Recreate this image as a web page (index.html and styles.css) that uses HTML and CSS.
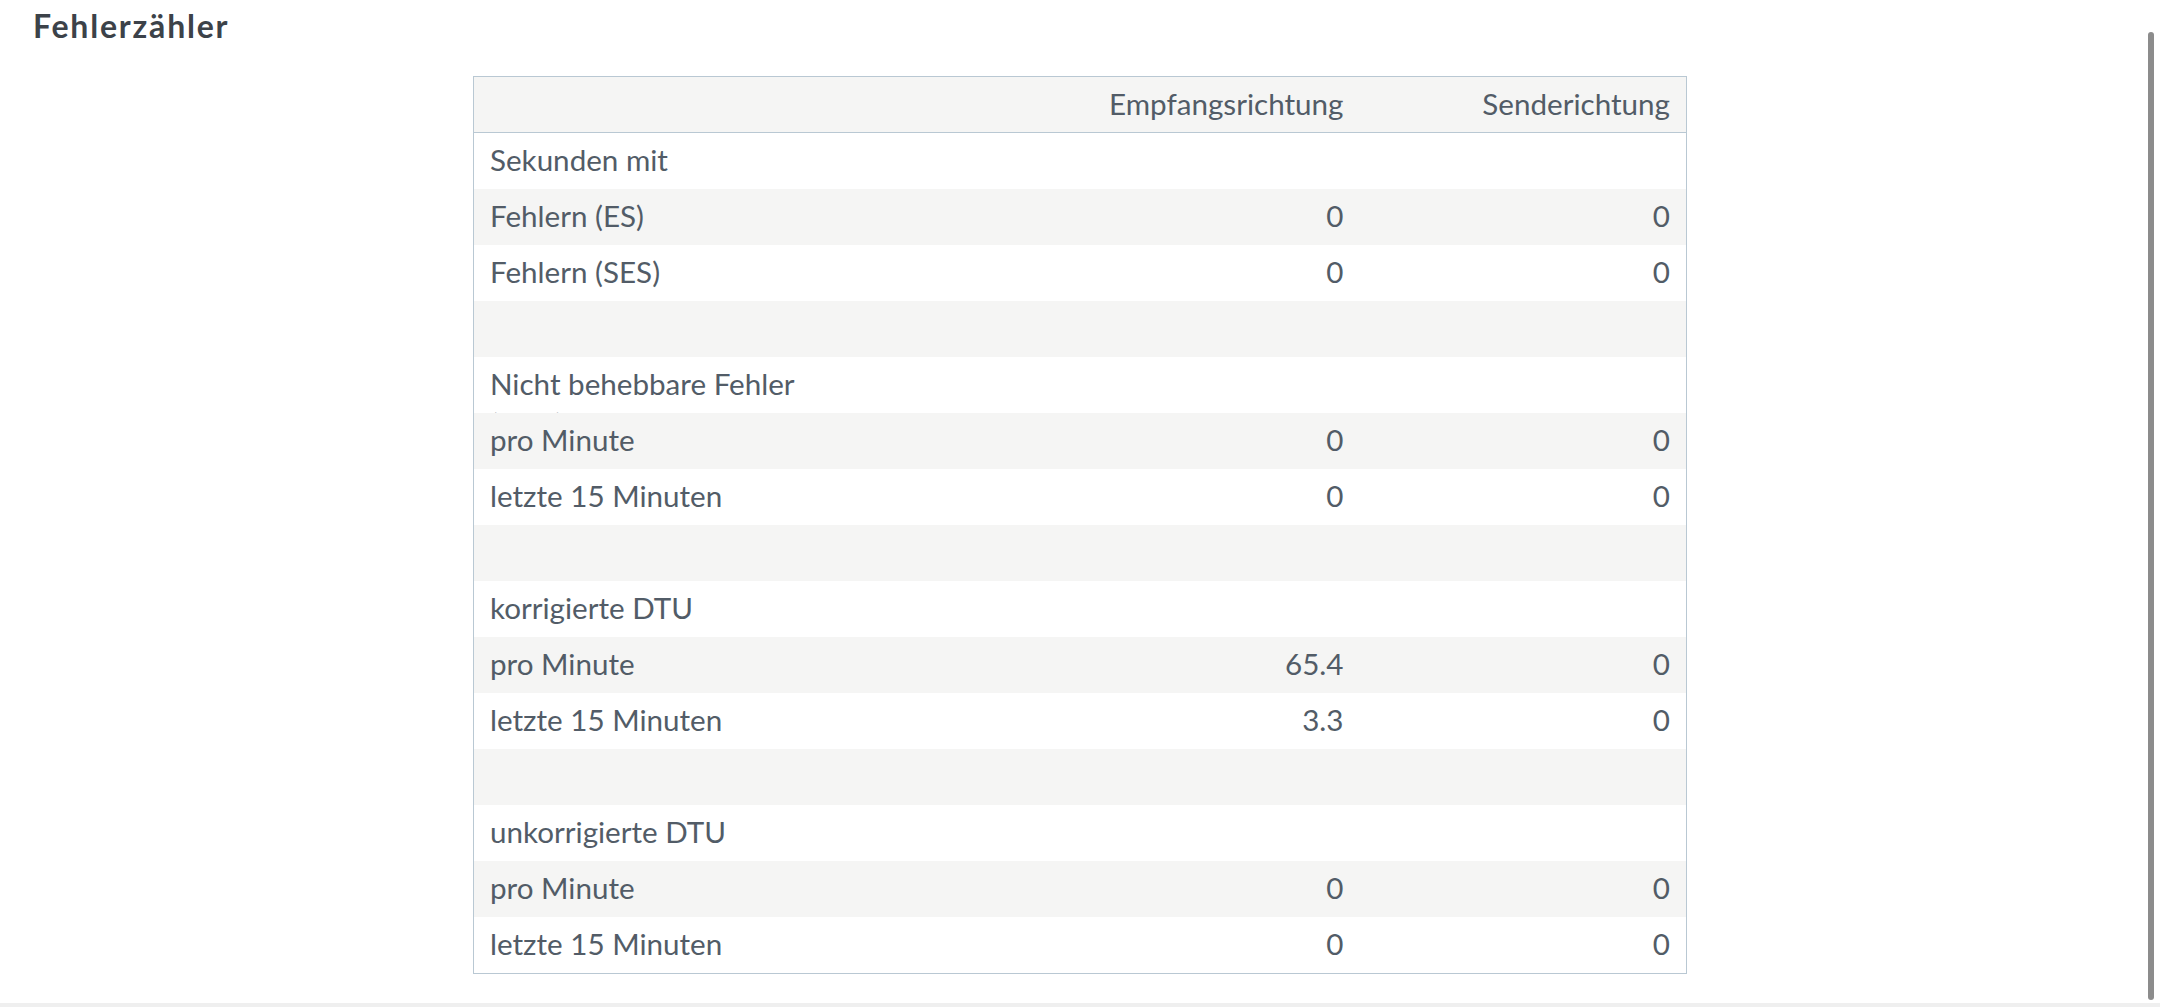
FILE: index.html
```html
<!DOCTYPE html>
<html lang="de">
<head>
<meta charset="utf-8">
<title>Fehlerzähler</title>
<link rel="stylesheet" href="styles.css">
</head>
<body>
<div class="page">
  <h2 class="title">Fehlerzähler</h2>
  <table class="stats">
    <colgroup>
      <col class="c-label">
      <col class="c-rx">
      <col class="c-tx">
    </colgroup>
    <thead>
      <tr><th></th><th class="num">Empfangsrichtung</th><th class="num">Senderichtung</th></tr>
    </thead>
    <tbody>
      <tr><td><div class="lbl">Sekunden mit</div></td><td class="num"></td><td class="num"></td></tr>
      <tr><td><div class="lbl">Fehlern (ES)</div></td><td class="num">0</td><td class="num">0</td></tr>
      <tr><td><div class="lbl">Fehlern (SES)</div></td><td class="num">0</td><td class="num">0</td></tr>
      <tr><td><div class="lbl"></div></td><td class="num"></td><td class="num"></td></tr>
      <tr><td><div class="lbl">Nicht behebbare Fehler (CRC)</div></td><td class="num"></td><td class="num"></td></tr>
      <tr><td><div class="lbl">pro Minute</div></td><td class="num">0</td><td class="num">0</td></tr>
      <tr><td><div class="lbl">letzte 15 Minuten</div></td><td class="num">0</td><td class="num">0</td></tr>
      <tr><td><div class="lbl"></div></td><td class="num"></td><td class="num"></td></tr>
      <tr><td><div class="lbl">korrigierte DTU</div></td><td class="num"></td><td class="num"></td></tr>
      <tr><td><div class="lbl">pro Minute</div></td><td class="num">65.4</td><td class="num">0</td></tr>
      <tr><td><div class="lbl">letzte 15 Minuten</div></td><td class="num">3.3</td><td class="num">0</td></tr>
      <tr><td><div class="lbl"></div></td><td class="num"></td><td class="num"></td></tr>
      <tr><td><div class="lbl">unkorrigierte DTU</div></td><td class="num"></td><td class="num"></td></tr>
      <tr><td><div class="lbl">pro Minute</div></td><td class="num">0</td><td class="num">0</td></tr>
      <tr><td><div class="lbl">letzte 15 Minuten</div></td><td class="num">0</td><td class="num">0</td></tr>
    </tbody>
  </table>
</div>
<div class="bottom-line"></div>
<div class="scrollbar"></div>
</body>
</html>
```

FILE: styles.css
```css
html, body {
  margin: 0;
  padding: 0;
  background: #ffffff;
  height: 100%;
  overflow: hidden;
}

body {
  font-family: Lato, "Noto Sans", "Liberation Sans", sans-serif;
  color: #525c67;
  position: relative;
}

.page {
  height: 1003px;
  padding-top: 7px;
  box-sizing: border-box;
}

.title {
  margin: 0;
  padding-left: 33px;
  font-size: 32px;
  line-height: 38px;
  font-weight: 700;
  letter-spacing: 1.8px;
  color: #3c4249;
}

.stats {
  margin: 31px auto 0;
  width: 1214px;
  table-layout: fixed;
  border-collapse: collapse;
  border: 1px solid #b9c8d3;
  font-size: 29.6px;
  line-height: 40px;
}

.c-label { width: 400px; }
.c-tx { width: 327px; }

.stats thead tr {
  background: #f5f5f4;
  border-bottom: 1px solid #b9c8d3;
}

.stats tr {
  height: 56px;
}

.stats tbody tr:nth-child(even) {
  background: #f5f5f4;
}

.stats th,
.stats td {
  padding: 7px 16px 0;
  vertical-align: top;
  font-weight: 400;
  text-align: left;
  box-sizing: border-box;
}

.stats .num {
  text-align: right;
}

.lbl {
  height: 49px;
  overflow: hidden;
}

.bottom-line {
  height: 4px;
  background: #efefef;
}

.scrollbar {
  position: absolute;
  top: 32px;
  right: 6px;
  width: 6px;
  height: 968px;
  border-radius: 3px;
  background: #8c8c8c;
}
```
